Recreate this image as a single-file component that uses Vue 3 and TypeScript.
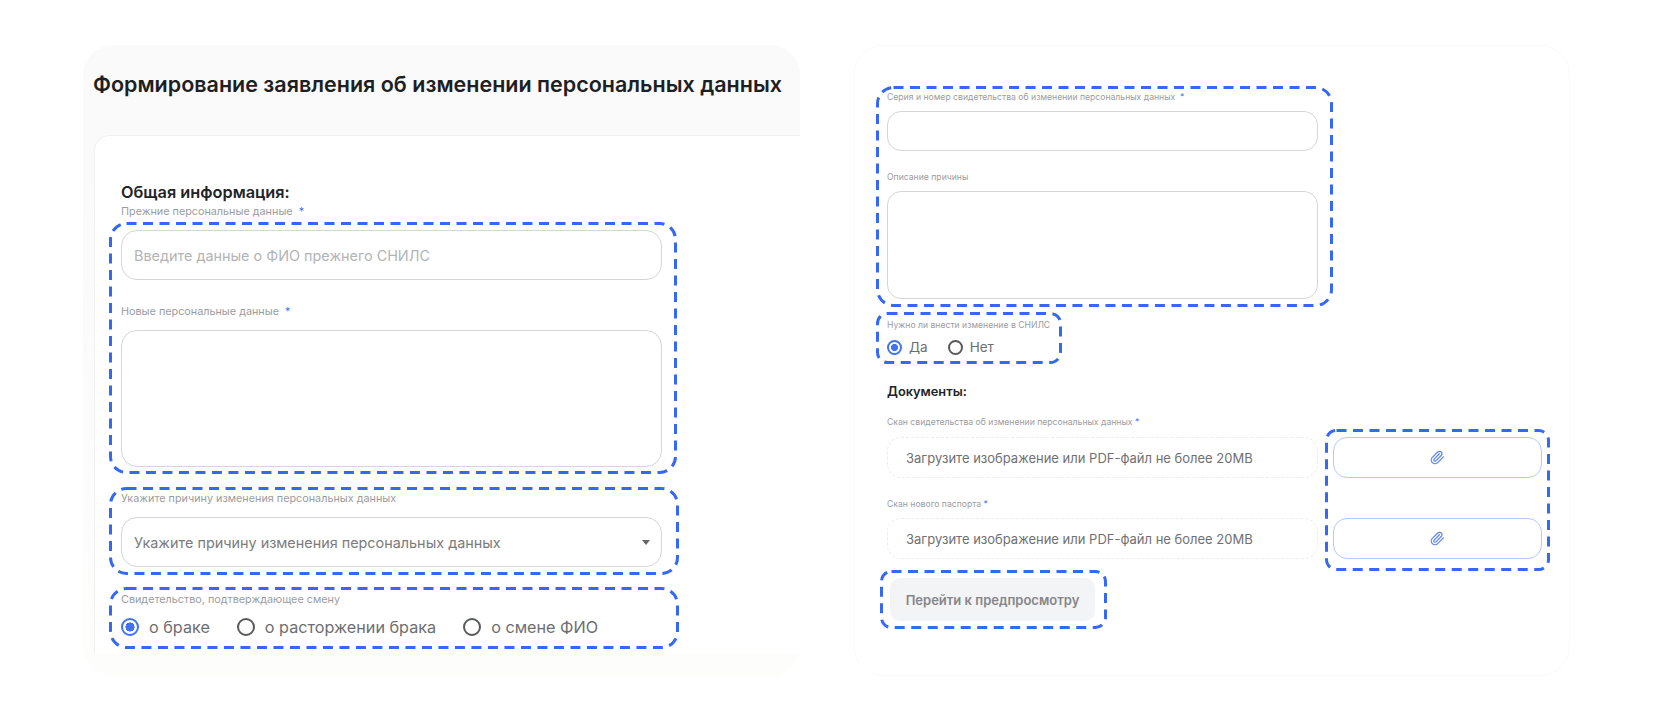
<script setup lang="ts">
const reasons = [
  { label: 'о браке', checked: true },
  { label: 'о расторжении брака', checked: false },
  { label: 'о смене ФИО', checked: false },
]
const snilsOptions = [
  { label: 'Да', checked: true },
  { label: 'Нет', checked: false },
]
const uploadText = 'Загрузите изображение или PDF-файл не более 20MB'
</script>

<template>
  <div class="page">
    <section class="panel panel-left">
      <h1 class="title">Формирование заявления об изменении персональных данных</h1>
      <div class="card">
        <h2 class="heading">Общая информация:</h2>
        <label class="label label-first">Прежние персональные данные <span class="req">&nbsp;*</span></label>

        <div class="mark mark-personal">
          <svg class="dash"><rect x="1.5" y="1.5" rx="16" /></svg>
          <input class="field field-big" placeholder="Введите данные о ФИО прежнего СНИЛС" />
          <label class="label label-second">Новые персональные данные <span class="req">&nbsp;*</span></label>
          <textarea class="field area-big"></textarea>
        </div>

        <div class="mark mark-reason">
          <svg class="dash"><rect x="1.5" y="1.5" rx="16" /></svg>
          <label class="label">Укажите причину изменения персональных данных</label>
          <div class="field field-big select">
            <span>Укажите причину изменения персональных данных</span>
            <i class="caret"></i>
          </div>
        </div>

        <div class="mark mark-cert">
          <svg class="dash"><rect x="1.5" y="1.5" rx="16" /></svg>
          <label class="label">Свидетельство, подтверждающее смену</label>
          <div class="radios radios-big">
            <div v-for="r in reasons" :key="r.label" class="radio">
              <span class="dot" :class="{ on: r.checked }"></span>{{ r.label }}
            </div>
          </div>
        </div>
      </div>
    </section>

    <section class="panel panel-right">
      <div class="mark mark-number">
        <svg class="dash"><rect x="1.5" y="1.5" rx="16" /></svg>
        <label class="label label-sm">Серия и номер свидетельства об изменении персональных данных <span class="req">&nbsp;*</span></label>
        <input class="field field-sm" />
        <label class="label label-sm label-desc">Описание причины</label>
        <textarea class="field area-sm"></textarea>
      </div>

      <div class="mark mark-snils">
        <svg class="dash"><rect x="1.5" y="1.5" rx="10" /></svg>
        <label class="label label-sm">Нужно ли внести изменение в СНИЛС</label>
        <div class="radios radios-sm">
          <div v-for="o in snilsOptions" :key="o.label" class="radio">
            <span class="dot" :class="{ on: o.checked }"></span>{{ o.label }}
          </div>
        </div>
      </div>

      <h2 class="heading heading-sm">Документы:</h2>

      <div class="docs">
        <div class="docs-left">
          <label class="label label-sm">Скан свидетельства об изменении персональных данных <span class="req">*</span></label>
          <div class="upload">{{ uploadText }}</div>
          <label class="label label-sm label-passport">Скан нового паспорта <span class="req">*</span></label>
          <div class="upload">{{ uploadText }}</div>
        </div>
        <div class="mark mark-attach">
          <svg class="dash"><rect x="1.5" y="1.5" rx="10" /></svg>
          <button v-for="n in 2" :key="n" class="attach" type="button">
            <svg viewBox="0 0 24 24" width="15" height="15" fill="none" stroke="#5d85f2" stroke-width="2" stroke-linecap="round" stroke-linejoin="round">
              <path d="m21.44 11.05-9.19 9.19a6 6 0 0 1-8.49-8.49l8.57-8.57A4 4 0 1 1 18 8.84l-8.59 8.57a2 2 0 0 1-2.83-2.83l8.49-8.48" />
            </svg>
          </button>
        </div>
      </div>

      <div class="mark mark-go">
        <svg class="dash"><rect x="1.5" y="1.5" rx="10" /></svg>
        <button class="go" type="button">Перейти к предпросмотру</button>
      </div>
    </section>
  </div>
</template>

<style scoped>
.page {
  display: flex;
  gap: 53px;
  width: 1653px;
  height: 710px;
  padding: 45px 0 0 83px;
  box-sizing: border-box;
  background: #fff;
  font-family: Inter, 'Noto Sans', sans-serif;
  overflow: hidden;
}

.panel {
  width: 717px;
  height: 631px;
  box-sizing: border-box;
  border-radius: 30px;
}

.panel-left {
  background: linear-gradient(#fafafb 0, #fafafb 20%, #fdfdfc 100%);
  padding: 25px 0 0 10px;
}

.panel-right {
  border: 1px solid #fbfbfb;
  padding: 41px 0 0 33px;
}

.title {
  margin: 0;
  font-size: 21.5px;
  line-height: 28px;
  font-weight: 600;
  color: #1e1f22;
  white-space: nowrap;
}

.card {
  margin: 37px 0 0 1px;
  height: 518px;
  box-sizing: border-box;
  padding: 46px 0 0 26px;
  background: #fff;
  border: 1px solid #f0f1f2;
  border-width: 1px 0 0 1px;
  border-top-left-radius: 16px;
}

.heading {
  margin: 0;
  font-size: 16.3px;
  line-height: 20px;
  font-weight: 600;
  color: #222326;
}

.heading-sm {
  margin: 21px 0 0;
  font-size: 12.8px;
  line-height: 18px;
}

.label {
  display: block;
  font-size: 10.8px;
  line-height: 14px;
  color: #9b9c9e;
  white-space: nowrap;
}

.label-first {
  margin-top: 3px;
}

.label-second {
  margin: 25px 0 11px;
}

.label-sm {
  font-size: 8.65px;
  line-height: 12px;
}

.label-desc {
  margin-top: 20px;
}

.label-passport {
  margin-top: 20px;
}

.req {
  color: #4a74ee;
}

.mark {
  position: relative;
  box-sizing: border-box;
}

/* stroke centre runs along the wrapper's edge */
.dash {
  position: absolute;
  top: -1.5px;
  left: -1.5px;
  width: calc(100% + 3px);
  height: calc(100% + 3px);
  pointer-events: none;
  overflow: visible;
}

.dash rect {
  width: calc(100% - 3px);
  height: calc(100% - 3px);
  fill: none;
  stroke: #3568f5;
  stroke-width: 3;
  stroke-dasharray: 10 6.5;
}

.mark-personal {
  margin: 4px 0 0 -11px;
  padding: 7px 13px 5px 11px;
  width: 565px;
}

.mark-reason {
  margin: 16px 0 0 -11px;
  padding: 4px 15px 6px 11px;
  width: 567px;
}

.mark-reason .label {
  margin-bottom: 11px;
}

.mark-cert {
  margin: 15px 0 0 -11px;
  padding: 5px 15px 9px 11px;
  width: 567px;
}

.mark-number {
  margin-left: -10px;
  padding: 4px 13px 6px 10px;
  width: 454px;
}

.mark-number .label {
  margin-bottom: 8px;
}

.mark-snils {
  margin: 8px 0 0 -10px;
  padding: 6px 10px 6px 10px;
  width: 183px;
}

.mark-attach {
  margin-top: 14px;
  padding: 7px 6px 10px 7px;
  width: 222px;
  height: 139px;
  display: flex;
  flex-direction: column;
  gap: 40px;
}

.mark-go {
  margin: 2px 0 0 -6px;
  padding: 7px 10px 6px 9px;
  width: 224px;
}

.field {
  display: block;
  width: 100%;
  box-sizing: border-box;
  background: #fff;
  border: 1px solid #d4d5d7;
  font-family: inherit;
  outline: none;
  resize: none;
}

.field-big {
  height: 50px;
  padding: 0 12px;
  border-radius: 16px;
  font-size: 14.4px;
}

.field-big::placeholder {
  color: #b3b4b6;
}

.area-big {
  height: 137px;
  border-radius: 16px;
}

.field-sm {
  height: 40px;
  border-radius: 14px;
}

.area-sm {
  height: 108px;
  border-radius: 14px;
}

.select {
  display: flex;
  align-items: center;
  justify-content: space-between;
  color: #7b7c7e;
}

.caret {
  margin-right: -1px;
  border-style: solid;
  border-width: 5px 4.5px 0;
  border-color: #666 transparent transparent;
}

.radios {
  display: flex;
  align-items: center;
  color: #6d6e70;
}

.radio {
  display: flex;
  align-items: center;
}

.radios-big {
  margin-top: 9px;
  height: 22px;
  gap: 27px;
  font-size: 16.2px;
}

.radios-big .dot {
  width: 18px;
  height: 18px;
  margin-right: 10px;
}

.radios-sm {
  margin-top: 7px;
  height: 18px;
  gap: 20px;
  font-size: 13.5px;
}

.radios-sm .dot {
  width: 15px;
  height: 15px;
  margin-right: 7px;
}

.dot {
  display: block;
  box-sizing: border-box;
  border: 2px solid #58595b;
  border-radius: 50%;
}

.dot.on {
  border-color: #3f72f5;
  background: radial-gradient(circle, #3f72f5 0 44%, #fff 48%);
}

.docs {
  display: flex;
  align-items: flex-start;
  gap: 8px;
  margin-top: 15px;
  height: 153px;
}

.docs-left {
  width: 431px;
}

.upload {
  margin-top: 9px;
  height: 41px;
  box-sizing: border-box;
  padding-left: 18px;
  display: flex;
  align-items: center;
  border: 1px dashed #ececec;
  border-radius: 14px;
  font-size: 13px;
  color: #6f7072;
  white-space: nowrap;
}

.label-passport + .upload {
  margin-top: 8px;
}

.attach {
  display: flex;
  align-items: center;
  justify-content: center;
  width: 209px;
  height: 41px;
  padding: 0;
  background: #fff;
  border: 1px solid #b5c9fb;
  border-radius: 14px;
}

.go {
  display: block;
  width: 205px;
  height: 43px;
  padding: 0;
  border: 0;
  border-radius: 10px;
  background: #f3f4f6;
  font-family: inherit;
  font-size: 13px;
  font-weight: 600;
  color: #858689;
}
</style>
